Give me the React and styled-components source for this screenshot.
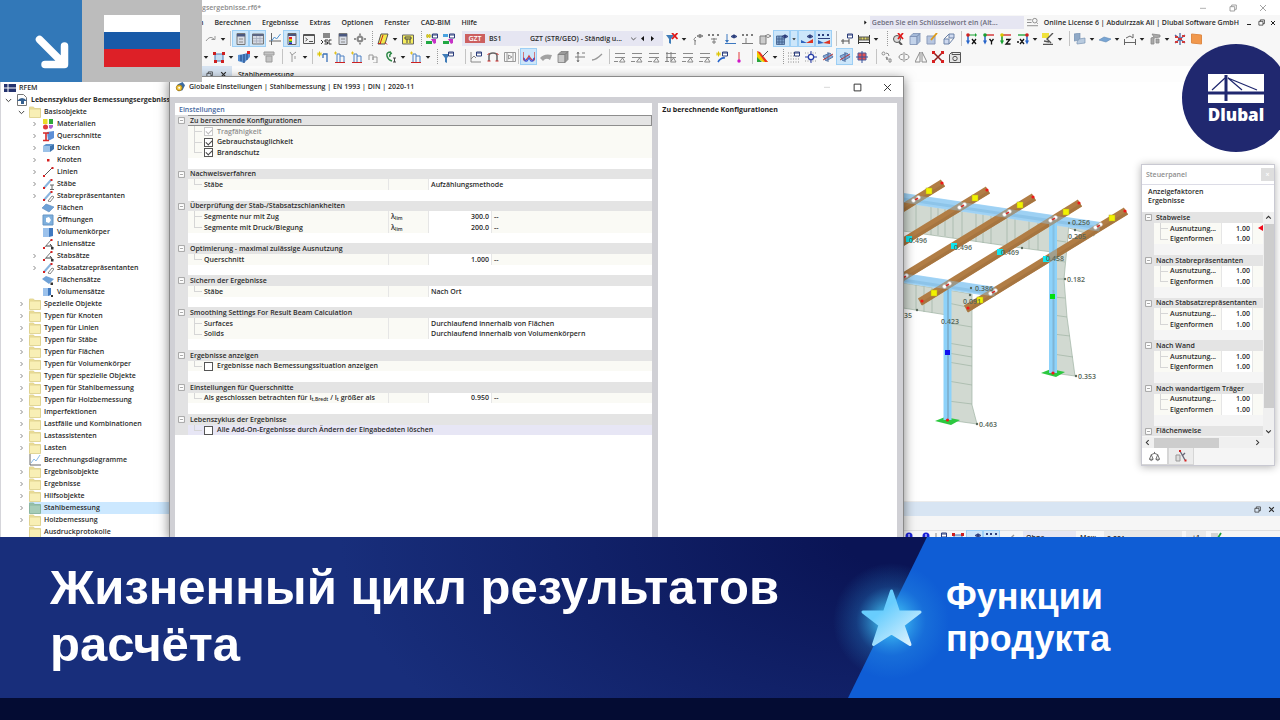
import React from 'react'
import styled, { createGlobalStyle, css } from 'styled-components'

const GlobalStyle = createGlobalStyle`
  * { box-sizing: border-box; }
  body {
    margin: 0;
    background: #040c33;
  }
  button, input, select {
    font: inherit;
    color: inherit;
    margin: 0;
    padding: 0;
    border: 0;
    background: none;
  }
`

const Page = styled.div`
  display: flex;
  flex-direction: column;
  height: 100vh;
  overflow: hidden;
  background: #040c33;
`

const AppWindow = styled.div`
  position: relative;
  flex: 1;
  min-height: 0;
  display: flex;
  flex-direction: column;
  overflow: hidden;
  background: #fff;
  color: #2b2b2b;
  font-family: 'Open Sans', 'Noto Sans', sans-serif;
  font-size: 7px;
  font-weight: 600;
  line-height: 10px;
`

/* ---------- title, menu, toolbars ---------- */

const TitleBar = styled.header`
  flex: none;
  display: flex;
  align-items: center;
  height: 15px;
  padding: 0 12px 0 202px;
  color: #8c8c8c;
`

const WindowButtons = styled.div`
  display: flex;
  gap: ${p => p.gap || 20}px;
  margin-left: ${p => (p.$inline ? 0 : 'auto')};
  color: ${p => p.color || '#8c8c8c'};

  button {
    display: flex;
    align-items: center;
    justify-content: center;
    width: 10px;
    height: 10px;
  }
`

const MenuBar = styled.nav`
  flex: none;
  display: flex;
  align-items: center;
  height: 15px;
  padding: 0 2px 0 199px;
  background: #f7f7f7;

  a {
    margin-right: 11px;
    color: inherit;
    text-decoration: none;
    white-space: nowrap;
  }
`

const Search = styled.div`
  display: flex;
  align-items: center;
  margin-left: auto;
  margin-right: 3px;

  input {
    width: 154px;
    height: 13px;
    margin-left: 1px;
    padding: 0 2px;
    background: #e6e6f2;
  }
  input::placeholder {
    color: #6c6c7c;
    opacity: 1;
  }
`

const License = styled.span`
  margin: 0 5px 0 6px;
  white-space: nowrap;
`

const Toolbar = styled.div`
  flex: none;
  display: flex;
  align-items: center;
  height: ${p => p.height}px;
  padding-left: 202px;
  background: #f7f7f7;
  overflow: hidden;
`

const Group = styled.div`
  flex: none;
  display: flex;
  align-items: center;
  width: ${p => p.$w}px;
  height: 15px;
  border-left: 1px ${p => (p.$dots ? 'dotted #9a9a9a' : 'solid #c4c4c4')};
  padding-left: ${p => (p.$first ? 0 : 1)}px;
  ${p => p.$first && 'border-left: 0;'}
`

const ToolButton = styled.button`
  display: flex;
  flex: none;
  align-items: center;
  justify-content: center;
  width: ${p => (p.$caret ? 8 : 17)}px;
  height: 17px;

  ${p => p.$active && css`
    background: #cce6fa;
    border: 1px solid #9dcff5;
  `}
`

const CaseBar = styled.div`
  flex: none;
  display: flex;
  align-items: center;
  width: 201px;
  height: 15px;
  background: #e6e6f2;

  label {
    display: flex;
    align-items: center;
    width: 65px;
    padding-left: 3px;
  }
  select {
    appearance: none;
    width: 103px;
    padding-left: 3px;
  }
  button {
    width: 10px;
    height: 10px;
  }
`

const Badge = styled.span`
  width: 20px;
  margin-right: 4px;
  background: #cc5f5f;
  color: #fff;
  line-height: 9px;
  text-align: center;
`

const Body = styled.div`
  flex: 1;
  min-height: 0;
  display: flex;
`

/* ---------- navigator ---------- */

const Sidebar = styled.aside`
  flex: none;
  width: 232px;
  border-left: 1px solid #d5d5da;
  overflow: hidden;
`

const PanelTitle = styled.div`
  display: flex;
  align-items: center;
  justify-content: flex-end;
  gap: 7px;
  height: 16px;
  padding-right: 5px;
  background: #d8e5f3;
`

const Tree = styled.ul`
  margin: 0;
  padding: 0;
  list-style: none;
`

const TreeRow = styled.li`
  display: flex;
  align-items: center;
  height: 12px;
  padding-left: ${p => p.$depth * 13 + 3}px;
  white-space: nowrap;
  font-weight: ${p => (p.$bold ? 700 : 600)};

  > svg:first-child {
    flex: none;
    width: 9px;
    margin-right: 3px;
  }
`

const TreeLabel = styled.span`
  display: flex;
  flex: 1;
  align-items: center;
  gap: 3px;
  height: 12px;
  background: ${p => (p.$selected ? '#cce8ff' : 'transparent')};
`

const Main = styled.main`
  flex: 1;
  min-width: 0;
  display: flex;
  flex-direction: column;
`

const TabTitle = styled.div`
  flex: none;
  height: 16px;
  padding: 4px 6px 0;
  background: #fdfdfd;
`

const Canvas = styled.div`
  flex: 1;
  min-height: 0;
  display: flex;
  justify-content: flex-end;
  overflow: hidden;
`

const Dock = styled.section`
  flex: none;
  height: 36px;
  overflow: hidden;
  background: #f6f6f6;
  border-top: 1px solid #ececec;
`

const DockTitle = styled(PanelTitle)`
  height: 14px;
  margin-bottom: 14px;
`

const DockTools = styled.div`
  display: flex;
  align-items: center;
  justify-content: flex-end;
  height: 15px;
  border-top: 1px solid #e0e0e0;
  padding-right: 58px;

  select, input {
    height: 15px;
    padding: 0 3px;
    background: #e8e8e8;
  }
  select {
    appearance: none;
    width: 53px;
    background: #e6e6f2;
    margin-left: 4px;
  }
  label {
    display: flex;
    align-items: center;
    justify-content: space-between;
    width: 102px;
    margin: 0 4px;
  }
  input { width: 78px; }
`

const StepButton = styled.button`
  width: 20px;
  height: 15px;
  margin-right: 4px;
  background: #e8e8e8;
`

/* ---------- dialog ---------- */

const Dialog = styled.section`
  position: absolute;
  top: 76px;
  bottom: 0;
  left: 169px;
  right: 376px;
  display: flex;
  flex-direction: column;
  border: 1px solid #8a8a8a;
  border-width: 1px 1px 0 1px;
  background: #d0d0d5;
  box-shadow: 0 3px 11px rgba(0, 0, 0, 0.5);
`

const DialogTitle = styled.header`
  flex: none;
  display: flex;
  align-items: center;
  gap: 4px;
  height: 20px;
  padding: 0 11px 0 5px;
  background: #fff;

  h2 {
    margin: 0;
    font-size: inherit;
    font-weight: inherit;
  }
  button:first-child { color: #c4c4c4; }
`

const DialogBody = styled.div`
  flex: 1;
  min-height: 0;
  display: flex;
  gap: 6px;
  padding: 6px 6px 0 5px;
`

const Pane = styled.div`
  flex: ${p => p.$grow} 1 0;
  min-width: 0;
  background: #fff;
  overflow: hidden;
`

const PaneTitle = styled.h3`
  margin: 0;
  padding: 0 4px;
  height: 12px;
  font-size: 7px;
  line-height: 13px;
  font-weight: ${p => (p.$dark ? 700 : 600)};
  color: ${p => (p.$dark ? '#1c1c1c' : '#48689f')};
`

/* property grid: three rows share 32px */
const Grid = styled.table`
  width: 100%;
  table-layout: fixed;
  border-collapse: separate;
  border-spacing: 0;

  tr { height: 11px; }
  tr:nth-child(3n) { height: 10px; }
  td, th {
    padding: 0;
    line-height: 10px;
    text-align: left;
    font-weight: 600;
    white-space: nowrap;
    overflow: hidden;
  }
`

const Gutter = styled.td`
  background: #e2e2e3;

  > div {
    display: flex;
    align-items: center;
    justify-content: center;
    height: 10px;
  }
`

const Head = styled.th`
  background: #e4e4e4;

  && { padding-left: 2px; }
  ${p => p.$focus && css`
    box-shadow: inset 0 1px #8d8d8d, inset -1px 0 #8d8d8d, inset 0 -1px #8d8d8d;
  `}
`

const Cell = styled.td`
  background: ${p => (p.$hot ? '#e7e6f5' : p.$value ? '#fff' : '#fafaf5')};
  border-left: ${p => (p.$line ? '1px solid #e6e6e6' : '0')};

  && {
    text-align: ${p => (p.$right ? 'right' : 'left')};
    padding: 0 2px;
  }
  sub {
    font-size: 5px;
    line-height: 1px;
    vertical-align: -1px;
  }
`

const ItemLabel = styled.label`
  display: flex;
  align-items: center;
  height: 10px;
  color: ${p => (p.$off ? '#8f8f8f' : 'inherit')};

  > svg { flex: none; margin-right: 2px; }
`

const Check = styled.input`
  appearance: none;
  flex: none;
  width: 9px;
  height: 9px;
  margin-right: 4px;
  border: 1px solid #555;
  background: #fff;

  &:disabled { border-color: #c9c9c9; }
  &:checked::after {
    content: '';
    display: block;
    width: 5px;
    height: 3px;
    margin: 1px;
    border: solid #444;
    border-width: 0 0 1px 1px;
    transform: rotate(-45deg);
  }
  &:checked:disabled::after { border-color: #bbb; }
`

/* ---------- control panel ---------- */

const ControlPanel = styled.section`
  position: absolute;
  top: 164px;
  right: 5px;
  width: 134px;
  border: 1px solid #c9c9d2;
  background: #f5f5f5;
  box-shadow: 0 1px 8px rgba(0, 0, 0, 0.3);
`

const ControlTitle = styled.header`
  display: flex;
  align-items: center;
  justify-content: space-between;
  height: 20px;
  padding-left: 4px;
  background: #fff;
  border-bottom: 1px solid #dcdce6;
  color: #8e8e8e;

  button {
    width: 13px;
    height: 13px;
    background: #dedede;
    color: #fff;
    line-height: 10px;
  }
`

const ControlHeading = styled.p`
  margin: 0;
  padding: 2px 6px 6px;
  height: 27px;
  background: #fff;
  line-height: 9px;
`

const ScrollArea = styled.div`
  display: flex;
  height: 225px;
  overflow: hidden;

  > div:first-child { flex: 1; min-width: 0; }
`

const VBar = styled.div`
  flex: none;
  display: flex;
  flex-direction: column;
  align-items: center;
  justify-content: space-between;
  width: 11px;
  padding: 2px 0;
  background: #f0f0f0;

  span {
    flex: 1;
    width: 10px;
    margin: 3px 0 20px;
    background: #cdcdcd;
  }
`

const HBar = styled.div`
  display: flex;
  align-items: center;
  height: 11px;
  padding-left: 2px;
  background: #f0f0f0;

  span {
    width: 65px;
    height: 10px;
    margin: 0 35px 0 3px;
    background: #cdcdcd;
  }
`

const Tabs = styled.div`
  display: flex;
  height: 17px;

  button {
    display: flex;
    align-items: center;
    justify-content: center;
    width: 26px;
    border: 1px solid #d6d6d6;
    border-top: 0;
    background: #ececec;
  }
  button:first-child { background: #fff; border-left: 0; }
`

/* ---------- corner badges and banner ---------- */

const Corner = styled.div`
  position: absolute;
  top: 0;
  left: 0;
  display: flex;
  height: 82px;
`

const ArrowBox = styled.div`
  width: 82px;
  background: #3278b8;
`

const FlagBox = styled.div`
  width: 120px;
  padding: 15px 22px;
  background: #bcbcbc;
`

const Flag = styled.div`
  height: 52px;
  background: linear-gradient(#fff 33%, #185aa8 33% 66%, #dd2027 66%);
`

const Logo = styled.div`
  position: absolute;
  top: 44px;
  right: -10px;
  display: flex;
  flex-direction: column;
  align-items: center;
  width: 108px;
  height: 108px;
  padding-top: 30px;
  border-radius: 50%;
  background: #20286f;
  color: #fff;
  font-size: 17px;
  font-weight: 800;
  line-height: 24px;
`

const Banner = styled.section`
  flex: none;
  display: flex;
  height: 161px;
  margin-bottom: 22px;
  background: radial-gradient(ellipse 560px 300px at 900px 0, #0a1455 10%, #182e7b 100%);
  color: #fff;
  font-family: 'Liberation Sans', Arial, sans-serif;
  font-weight: 700;

  h1 {
    flex: 1;
    align-self: center;
    margin: 0;
    padding: 0 0 4px 50px;
    font-size: 49px;
    line-height: 57px;
  }
`

const Category = styled.div`
  position: relative;
  flex: none;
  display: flex;
  align-items: center;
  width: 33.75%;

  span {
    position: relative;
    width: 200px;
    margin-left: 98px;
    font-size: 36px;
    line-height: 42px;
  }
`

const Slant = styled.div`
  position: absolute;
  inset: 0;
  background: #0f5dd5;
  clip-path: polygon(79px 0, 100% 0, 100% 100%, 0 100%);
`

const Star = styled.svg`
  position: absolute;
  top: 0;
  left: -37px;
`

/* ---------- glyphs, all on a 12x12 field ---------- */

const G = '#7c7c7c'
const N = '#2c3f7c'
const eye = (
  <g fill="none" stroke={N}>
    <path d="M6 3.5q3-3 6 0q-3 3-6 0" fill="#dfe6f5" />
    <circle cx="9" cy="3.3" r="1.2" fill={N} />
  </g>
)
const win = <path d="M6.500 1h5v4h-5zM6.500 2h5" fill="#fff" stroke={N} />
const supports = c => (
  <g fill="none" stroke={c}>
    <path d="M1 2.500h10M1 6.500h10" />
    <path d="M5.500 11l3-4l2.500 4zM0 10.500h4" />
  </g>
)

const glyphs = {
  redo: <path d="M1 8q4-6 8-2M10 3v3.500h-3.500" fill="none" stroke="#999" />,
  caret: <path d="M2.500 4.500h7l-3.500 4z" fill="#222" />,
  panel: <g><path d="M2 .5h8v11h-8z" fill="#d9dde5" stroke="#777" /><path d="M2 1h8v2.500h-8z" fill="#4a5880" /><path d="M4 6h4M4 9h4" stroke="#888" /></g>,
  table: <g><path d="M.5 1h11v10H.5z" fill="#d5d9e2" stroke="#777" /><path d="M.5 1h11v2H.5z" fill="#5c6684" /><path d="M1 5.500h10M1 8h10M4.500 3v8M8 3v8" stroke="#a3aabb" strokeWidth=".7" /></g>,
  graph: <g fill="none"><path d="M2.500 0v12M0 8h12" stroke="#666" /><path d="M2.500 8l3-4l2 2l4-5" stroke="#4a8fd0" /></g>,
  legend: <g><path d="M2 .5h8v11h-8z" fill="#eef" stroke="#666" /><path d="M2 1h8v2h-8z" fill="#4a5880" /><path d="M3 4h3v2H3z" fill="#d22" /><path d="M3 6h3v2H3z" fill="#e4c000" /><path d="M3 8h3v1.500H3z" fill="#2a2" /><path d="M3 9.500h3V11H3z" fill="#22c" /></g>,
  terminal: <g fill="none" stroke="#555"><path d="M.5 1.500h11v9H.5z" fill="#f1f1f1" /><path d="M.5 2.500h11M2.500 5l2 1.500l-2 1.500M6 8.500h4" /></g>,
  script: <g><path d="M3 0h7v5H3z" fill="#888" /><path d="M1 7l2 2l-2 2M8 7H5v2h2.500v2H4.500M11.500 7H9v4h2.500" fill="none" stroke="#333" /></g>,
  globe: <g><circle cx="6" cy="6" r="3.500" fill="#888" /><circle cx="6" cy="6" r="1.300" fill="#fff" /><path d="M0 6h2M10 6h2M6 .5v2M6 10v1.500" stroke="#333" /></g>,
  section: <g><path d="M4 1h7L8 11H1z" fill="#f3e84a" stroke="#555" /><path d="M3 11L6 2M1 10.500h3M8 9.500l2 2" stroke="#c22" /></g>,
  note: <g><path d="M.5 2h11v9H.5z" fill="#f6ee5e" stroke="#666" /><path d="M3 4h6v2H3zM5 6v4M8 6v4" fill="none" stroke="#444" /></g>,
  newcase: <g><path d="M0 8h6v3H0z" fill="#21a843" /><path d="M0 1.500h6v3H0z" fill="#b9c9b0" /><path d="M1 1l3 4M4 1L1 5M0 3h5" stroke="#dcc400" />{win}<path d="M5 6h5v4l-2 1z" fill="#c632c6" /></g>,
  copycase: <g><path d="M0 8h6v3H0z" fill="#21a843" /><path d="M0 1h5v3H0z" fill="#4aa3df" />{win}<path d="M5 6h5v4l-2 1z" fill="#c632c6" /></g>,
  left: <path d="M8 2.500v7l-4-3.500z" fill="#111" />,
  right: <path d="M4 2.500v7l4-3.500z" fill="#111" />,
  filterx: <g><path d="M0 2h8l-3 4v5l-2-1V6z" fill="#3f7cb8" /><path d="M6 0l5.500 6M11.500 0L6 6" stroke="#e01818" strokeWidth="1.800" /></g>,
  filter: <g><path d="M0 3h8l-3 4v5l-2-1V7z" fill="#3f7cb8" />{win}</g>,
  eyegray: <g fill="none" stroke={G}><path d="M6 3q3-3 6 0q-3 3-6 0M5 4q-4 3 0 4M4 7v5" /><circle cx="9" cy="3" r="1" fill={G} /></g>,
  forces: <g fill="none" stroke={G}><path d="M0 1l2 2M2 1L0 3M4 1l2 2M6 1L4 3M9 1l2 2M11 1L9 3M3 6h6M6 5v6M4 9h4" /></g>,
  eyeload: <g>{eye}<path d="M2 1v8M0 10.500h11" fill="none" stroke="#3c78c0" /><path d="M0 7l2 3l2-3z" fill="#3c78c0" /></g>,
  values: <g fill="none" stroke={G}><path d="M0 1l2 2M2 1L0 3M4 1l2 2M6 1L4 3M9 1l2 2M11 1L9 3M4 5v5M0 10.500h11" /></g>,
  eyebox: <g stroke={G} fill="#ccc"><path d="M1 3h6v8H1z" /><path d="M6 3q3-3 6 0q-3 3-6 0" fill="#fff" /></g>,
  eyegrid: <g><path d="M.5 3h8v8.500h-8zM3 3v8.500M6 3v8.500M.5 6h8M.5 9h8" fill="#7fa2cc" stroke="#3d5b88" strokeWidth=".8" />{eye}</g>,
  eyebeam: <g>{eye}<path d="M0 10V7l6 3z" fill="#2d63bd" /><path d="M12 6v4H5z" fill="#d32" /></g>,
  eyevals: <g><path d="M0 1l2 2M2 1L0 3M4 1l2 2M6 1L4 3M9 1l2 2M11 1L9 3M0 5.500h12" stroke={N} /><path d="M0 11V7l6 3z" fill="#2d63bd" /><path d="M12 7v4l-7-1z" fill="#d32" /></g>,
  wincfg: <g>{win}<path d="M0 8h8M2 6v5M8 6v5" stroke="#555" /></g>,
  dims: <g><path d="M.5 2v9M11.500 2v9M0 9.500h12" stroke="#333" /><path d="M1 4h10v3H1z" fill="#e6dc5e" stroke="#555" /><path d="M3 4v3M6 4v3M9 4v3" stroke="#555" /></g>,
  findx: <g><circle cx="5" cy="6" r="3.500" fill="#ddd" stroke="#555" /><path d="M7 9l3 3" stroke="#555" strokeWidth="2" /><path d="M6 0l5 6M11 0L6 6" stroke="#e01818" strokeWidth="1.700" /></g>,
  cube: <g stroke="#7b8fb2" strokeWidth=".8" fill="#c3d3ea"><path d="M1 3.500h7v8H1z" /><path d="M1 3.500l3-3h7l-3 3zM8 3.500l3-3v8l-3 3z" fill="#a4b9d8" /></g>,
  cubegray: <g stroke="#7d7d7d" strokeWidth=".8" fill="#c9c9c9"><path d="M1 3.500h7v8H1z" /><path d="M1 3.500l3-3h7l-3 3zM8 3.500l3-3v8l-3 3z" fill="#999" /></g>,
  cubeedit: <g><path d="M1 3h8v8H1z" fill="#b7c6e0" stroke="#8b9bba" /><path d="M11 0L5 7" stroke="#dd9a18" strokeWidth="1.800" /></g>,
  cubes: <g fill="#cfdaf0" stroke="#6d83a8"><path d="M6 1h5v4H6z" /><path d="M1 6h5v5H1zM1 6l5-5M6 11l5-6" /></g>,
  axX: <g><path d="M2 1v8" stroke="#2764c9" strokeWidth="1.500" /><path d="M0 7.500h4l-2 4z" fill="#2764c9" /><path d="M3 2h8M9.500 .5v3" stroke="#18a031" /><circle cx="2" cy="2" r="1.800" fill="#d02020" /><path d="M6 6l4 5M10 6l-4 5" stroke="#111" strokeWidth="1.300" /></g>,
  axY: <g><path d="M2 1v8" stroke="#2764c9" strokeWidth="1.500" /><path d="M0 7.500h4l-2 4z" fill="#2764c9" /><path d="M3 2h8" stroke="#d02020" strokeWidth="1.300" /><circle cx="2" cy="2" r="1.800" fill="#18a031" /><path d="M6.500 6l2 2.500l2-2.500M8.500 8.500v3" fill="none" stroke="#111" strokeWidth="1.300" /></g>,
  axZ: <g><path d="M2 1v8" stroke="#16981f" strokeWidth="1.500" /><path d="M0 7.500h4l-2 4z" fill="#18a031" /><path d="M3 2h8" stroke="#d02020" strokeWidth="1.300" /><circle cx="2" cy="2" r="1.800" fill="#d9c400" /><path d="M6 6.500h4l-4 4.500h4.500" fill="none" stroke="#111" strokeWidth="1.300" /></g>,
  axN: <g><path d="M10 1v8" stroke="#2764c9" strokeWidth="1.500" /><path d="M8 7.500h4l-2 4z" fill="#2764c9" /><path d="M1 2h8" stroke="#18a031" strokeWidth="1.300" /><circle cx="10" cy="2" r="1.800" fill="#d02020" /><path d="M3 6l4 5M7 6l-4 5M0 9h2" stroke="#111" strokeWidth="1.300" /></g>,
  scope: <g><path d="M0 0h7v5H0z" fill="#f0e23c" /><path d="M11 0L5 6l4 4M1 11.500h10M2 8l5 1" fill="none" stroke="#555" strokeWidth="1.400" /></g>,
  solids: <g><path d="M0 1l6-1v7l-6 1z" fill="#90a9c7" stroke="#7a93b3" strokeWidth=".7" /><path d="M5 6l6-1v5l-8 1V9z" fill="#b9cbdf" stroke="#7a93b3" strokeWidth=".7" /></g>,
  surface: <path d="M0 7l5-3l7 2l-5 3z" fill="#78a5d4" stroke="#5f88b3" strokeWidth=".6" />,
  measure: <g fill="none" stroke="#666"><path d="M0 9.500h12M.5 6v6M11.500 6v6M2 5l4-2l3 2M9 1v4" /></g>,
  press: <g fill="#aaa" stroke="#888" strokeWidth=".8"><path d="M3 1l8 1v2l-6 1v6H2V5l3-1z" /><path d="M7 6h3v4H7z" /></g>,
  burst: <g><path d="M1 2l10 8M11 2L1 10M6 0v12" stroke="#4a68a4" strokeWidth="1.300" /><path d="M1 3h3v2H1zM8 2h3v2H8zM4 5h4v2H4zM1 8h3v2H1zM8 8h3v2H8z" fill="#cf3b3b" /></g>,
  slab: <path d="M.5 1l10 1v9l-10-1z" fill="#f1984c" stroke="#e08a45" />,
  frame: <g><path d="M2 3h8v7H2z" fill="#c6def2" stroke="#4878b5" /><path d="M0 1h3v3H0zM9 1h3v3H9zM1 9h3v3H1zM8 9h3v3H8z" fill="#ce1f1f" /></g>,
  plates: <g><path d="M0 4l6-1l6-2v5l-6 6l-6-2z" fill="#5a92d4" /><path d="M3 4v6M6 3v9M9 3v6" stroke="#1e437c" /><path d="M9 0h3v3H9z" fill="#d22" /></g>,
  block: <g fill="#c4c4c4" stroke="#9c9c9c"><path d="M1 1h10v3H1z" /><path d="M3 5h6v6H3z" /></g>,
  hingegray: <g fill="none" stroke="#9a9a9a"><path d="M3 1l2 3l4-3M5 4v7M8 5v3" /></g>,
  newload: <g><path d="M0 3h5M2.500 .5v5M1 1.500l3 3M4 1.500l-3 3" stroke="#dcc400" /><path d="M6 3h4v8M6 3v4" fill="none" stroke="#3c72b8" strokeWidth="1.300" /></g>,
  load: <g fill="none" stroke="#4a7fc2"><path d="M3 11V3h3v8M6 5h4v6" /><path d="M0 2h3M1.500 .5v3" stroke="#e0c020" /><path d="M1 11.500h10" stroke="#c22" /></g>,
  loadgray: <g fill="none" stroke="#999"><path d="M1 9V4h4v5M5 9V6h4v6H5" /></g>,
  coil: <g fill="none" stroke="#2f8a48" strokeWidth="1.500"><path d="M6 1q-5 0-4 4t5 5M7 2q-3 1-2 4" /><path d="M8 7h3M9.500 7v4M8 11h3" stroke="#444" strokeWidth="1" /></g>,
  diagram: <g>{win}<path d="M1 1v10h10M1 8l3-3l2 2" fill="none" stroke="#888" /></g>,
  arch: <g><path d="M2 10V5q0-3 4-3t4 3v5" fill="none" stroke="#666" strokeWidth="1.500" /><path d="M.5 10h3M8.500 10h3M.5 4l2-2M11.500 4l-2-2" stroke="#c22" /></g>,
  film: <g fill="none" stroke="#999"><path d="M.5 1.500h11v9H.5zM3 1.500v9M9 1.500v9M4.500 4l3.500 2l-3.500 2z" /></g>,
  wave: <g fill="none" strokeWidth="1.300"><path d="M0 1v5q1 5 3 3t3-4q1 2 3 4t3-3V1" stroke="#d23a3a" /><path d="M1 7q1 4 3 3l2-3l2 3q2 1 3-3" stroke="#3a5ae0" /></g>,
  shell: <path d="M0 7q4-5 12-3l-2 5q-4-3-7 1z" fill="#a2a2a2" />,
  arrows: <g fill="none" stroke={G}><path d="M4 1v10M1 6h10M3 3l1-2l1 2M8 2h3M3 9l1 2l1-2" /></g>,
  line: <path d="M1 9q4 0 10-6" fill="none" stroke="#999" strokeWidth="1.300" />,
  sup: supports('#8a8a8a'),
  supall: <g>{supports('#8a8a8a')}<path d="M2 1v10M6 1v9" stroke={G} /></g>,
  newwin: <g>{win}<path d="M0 3h5M2.500 .5v5M1 1.500l3 3M4 1.500l-3 3" stroke="#dcc400" /><path d="M2 11q3-5 7-4" fill="none" stroke="#2764c9" strokeWidth="1.600" /></g>,
  pin: <g><path d="M6 1v8" stroke="#e23a3a" /><circle cx="6" cy="10" r="1.700" fill="#cf16c8" /></g>,
  rainbow: <g><path d="M0 0l11 11H6L0 7z" fill="#f0d000" /><path d="M0 0l3 1l8 10H8z" fill="#e32" /><path d="M0 6l5 5H0z" fill="#2aa63a" /><path d="M5 6l6-6" stroke="#555" /></g>,
  dotgrid: <g><path d="M0 2h12M0 5h12M0 8h12M0 11h12" stroke="#888" strokeDasharray="1 1.500" />{win}</g>,
  snap: <g><path d="M0 2h12M0 10h12" stroke="#999" strokeDasharray="1 1.500" /><circle cx="6" cy="6" r="2.700" fill="#fff" stroke="#2a3fa8" strokeWidth="1.300" /><path d="M6 0v3M6 9v3M0 6h3M9 6h3" stroke="#2a3fa8" /></g>,
  cross: <g><path d="M1 5l7-3l3 4l-7 4z" fill="#86a9d6" stroke="#5a7aac" /><path d="M1 9l10-6" stroke="#c23a3a" /><path d="M6 1v10" stroke="#4a6a9c" /></g>,
  crossred: <g><path d="M2 2h8v7H2z" fill="#e25151" stroke="#4a5a9c" /><path d="M0 6h12M6 0v12" stroke="#34509c" /></g>,
  node: <g fill="none" stroke="#8c8c8c"><circle cx="2.500" cy="2.500" r="1.500" /><path d="M5 2q3 0 3 3" /><path d="M5 6l2 1l-1 2zM8 8h2v3H8z" /></g>,
  orbit: <g fill="none" stroke="#8c8c8c"><ellipse cx="6" cy="6" rx="5" ry="3" /><path d="M6 0v12" stroke="#f7f7f7" strokeWidth="2" /><path d="M6 1v10" /></g>,
  mirror: <path d="M5 1v10H0zM7 1v10h5z" fill="none" stroke="#8c8c8c" />,
  redx: <g><path d="M1 1l10 10M11 1L1 11" stroke="#8c2020" strokeWidth="1.500" /><path d="M0 0h3v3H0zM9 0h3v3H9zM0 9h3v3H0zM9 9h3v3H9z" fill="#d81f1f" /></g>,
  camera: <g fill="#e6e6e6" stroke="#555"><path d="M.5 3.500l2-2h9v10H.5zM3 1.500v2h8.500" /><circle cx="6" cy="7.500" r="2.200" /></g>,
  info: <g><path d="M0 6h6v5H0z" fill="#c22" /><circle cx="8" cy="4" r="3.500" fill="#1b22d8" /><path d="M8 2v4" stroke="#fff" /></g>,
  done: <g><path d="M1 1h7v7H1z" fill="#d5d5d5" /><path d="M3 6l3 3l5-8" fill="none" stroke="#1fa03a" strokeWidth="1.800" /></g>,
  folder: <g stroke="#dccf8c" strokeWidth=".8"><path d="M.5 1h4l1 1.500h6v8.500H.5z" fill="#f0e29a" /><path d="M.5 3h11v8.500H.5z" fill="#f8efb5" /></g>,
  folderGreen: <g stroke="#86b39a" strokeWidth=".8"><path d="M.5 1h4l1 1.500h6v8.500H.5z" fill="#9cc6b1" /><path d="M.5 3h11v8.500H.5z" fill="#a6ccb8" /></g>,
  model: <g><path d="M1.500 .5h6l3 3v8h-9z" fill="#fff" stroke="#777" /><path d="M1 7q5-6 10 0H8v3H5V7z" fill="#35608f" /></g>,
  material: <g><path d="M1 1h4.500v5H1z" fill="#e9dc26" /><path d="M7 1h4v5H7z" fill="#2fa83a" /><circle cx="3.500" cy="9" r="2.500" fill="#e03a3a" /><path d="M7 7h4v2l-2 2l-2-1z" fill="#b05fd0" /></g>,
  profile: <g><path d="M5 2l7-1v7l-6 3z" fill="#5d8fd6" /><path d="M1 3h6M4 3v7M1 10.500h6" stroke="#d62a2a" strokeWidth="1.600" /></g>,
  thick: <g><path d="M1 4h7v6H1z" fill="#9cc2e8" /><path d="M1 4l3-2h8L8 4z" fill="#5e94cd" /><path d="M8 4l4-2v5l-4 3z" fill="#3c73af" /></g>,
  dot: <path d="M5 5h2.500v2.500H5z" fill="#d62020" />,
  ln: <g><path d="M2 10l8-8" stroke="#555" /><path d="M1 9h2v2H1zM9.500 1h2v2h-2z" fill="#d62020" /></g>,
  bar: <g><path d="M2 10l7-8" stroke="#8ab4de" strokeWidth="2" /><path d="M1 9h2v2H1zM8.500 1h2v2h-2z" fill="#d62020" /><path d="M8 7h4M10 7v4M8 11.500h4" stroke="#666" /></g>,
  barrep: <g><path d="M2 10l7-8" stroke="#8ab4de" strokeWidth="2" /><path d="M1 9h2v2H1zM8.500 1h2v2h-2z" fill="#d62020" /><path d="M6 11l4-5l2 1l-4 5z" fill="#fff" stroke="#666" strokeWidth=".8" /></g>,
  face: <path d="M0 6l4-4l8 3l-5 5z" fill="#6fa1d6" stroke="#5d8cbe" strokeWidth=".6" />,
  hole: <g><path d="M1 1h10v10H1z" fill="#7eb0de" stroke="#6695c3" /><path d="M4 4l3-1l2 3l-2 3l-3-1z" fill="#fff" /></g>,
  vol: <g><path d="M1 2h6v9H1z" fill="#9cc2ec" /><path d="M7 2h4v8l-4 1z" fill="#4079c0" /></g>,
  set: <g><path d="M2 10l7-8" stroke="#777" /><path d="M1 9h2v2H1zM8.500 1h2v2h-2z" fill="#d62020" /><path d="M4 8h6M8 6l3 4" stroke="#444" /><path d="M9 9h2.500v2.500H9z" fill="#333" /></g>,
  faceset: <g><path d="M0 5l4-3l8 3l-5 5z" fill="#6fa1d6" /><path d="M8.500 8.500H11V11H8.500z" fill="#333" /></g>,
  volset: <g><path d="M1 2h5v8H1z" fill="#9cc2ec" /><path d="M6 2h3v7l-3 1z" fill="#4079c0" /><path d="M9 9h2v2H9z" fill="#333" /></g>,
  chart: <g fill="none"><path d="M1 0v11h11" stroke="#666" /><path d="M2 9l3-4l2 2l4-6" stroke="#8abbe6" /></g>,
  flag: <g><path d="M0 2h12v8H0z" fill="#25336e" /><path d="M0 6h12M4 2v8" stroke="#fff" /></g>,
  gear: <g><path d="M3 3l6-3l3 4l-3 6l-5 1z" fill="#3b6aa0" /><circle cx="5" cy="7" r="3.500" fill="#f0c53d" stroke="#a87c10" /><circle cx="5" cy="7" r="1.200" fill="#fff" /></g>,
  scales: <g fill="none" stroke="#555" strokeWidth=".9"><path d="M6 1v2M2.500 4L6 2.500L9.500 4M2.500 4L.5 9h4zM9.500 4l-2 5h4zM.5 9q2 3 4 0M7.500 9q2 3 4 0" /></g>,
  tabmodel: <g><path d="M1 5h4v6H1z" fill="#ddd" stroke="#999" /><path d="M5 1l5 9M10 3L7 6" stroke="#667" strokeWidth="1.300" /><path d="M4 0h2v2H4zM9.500 9.500h2v2h-2z" fill="#d62020" /></g>,
  expand: <path d="M4.500 3l3 3l-3 3" fill="none" stroke="#777" strokeWidth="1.300" />,
  collapse: <path d="M2 4.500l4 4l4-4" fill="none" stroke="#444" strokeWidth="1.500" />,
  up: <path d="M2 8l4-4l4 4" fill="none" stroke="#333" strokeWidth="1.800" />,
  down: <path d="M2 4l4 4l4-4" fill="none" stroke="#333" strokeWidth="1.800" />,
  prev: <path d="M8 2L4 6l4 4" fill="none" stroke="#333" strokeWidth="1.800" />,
  next: <path d="M4 2l4 4l-4 4" fill="none" stroke="#333" strokeWidth="1.800" />,
  min: <path d="M1.500 6.500h9" stroke="currentColor" />,
  minlow: <path d="M2 9h8" stroke="currentColor" strokeWidth="2" />,
  max: <path d="M1.500 1.500h9v9h-9z" fill="none" stroke="currentColor" strokeWidth="1.200" />,
  restore: <path d="M1.500 4h7v6.500h-7zM4 4V1.500h7V8H8.500" fill="none" stroke="currentColor" strokeWidth="1.200" />,
  close: <path d="M1.500 1.500l9 9M10.500 1.500l-9 9" stroke="currentColor" strokeWidth="1.200" />,
  closebold: <path d="M2 2l8 8M10 2l-8 8" stroke="currentColor" strokeWidth="2" />,
  minus: <g fill="#fff" stroke="#8d8d8d" strokeWidth="1.300"><path d="M1 1h10v10H1zM3.500 6h5" /></g>,
  list: <g fill="none" stroke="#888"><path d="M0 3h5M0 6h5M0 9.500h12" /><circle cx="8.500" cy="4" r="2.500" /><path d="M10.500 6l1.500 1.500" /></g>,
  empty: null,
}

const Icon = ({ name, size = 12 }) => (
  <svg width={size} height={size} viewBox="0 0 12 12" aria-hidden="true">{glyphs[name]}</svg>
)

// a leading "*" marks a pressed button, "v" is a drop-down caret
const row1a = [
  { w: 28, first: true, items: 'redo v' },
  { w: 142, items: '*panel *table graph *legend terminal script panel globe' },
  { w: 49, dots: true, items: 'section v note' },
  { w: 41, dots: true, items: 'newcase copycase' },
]
const row1b = [
  { w: 173, first: true, items: 'filterx v eyegray forces eyeload values eyebox *eyegrid *v *eyebeam *eyevals' },
  { w: 51, items: 'wincfg dims v' },
  { w: 74, dots: true, items: 'findx cube cubeedit cubes' },
  { w: 108, items: 'axX axY axZ axN v scope v' },
  { w: 140, items: 'solids v surface v measure v press v burst slab' },
]
const row2 = [
  { w: 80, first: true, items: 'v frame v plates v block' },
  { w: 30, items: 'hingegray v' },
  { w: 125, items: 'newload load load loadgray coil v load v' },
  { w: 28, dots: true, items: 'filter' },
  { w: 53, items: 'diagram arch film' },
  { w: 91, items: '*wave shell cubegray arrows line' },
  { w: 143, items: 'sup sup sup supall sup sup newwin pin' },
  { w: 31, items: 'rainbow v' },
  { w: 93, dots: true, items: 'dotgrid snap cross *cross crossred' },
  { w: 92, items: 'node orbit mirror redx camera' },
]

const ToolGroups = ({ groups }) => groups.map((g, i) => (
  <Group key={i} $w={g.w} $dots={g.dots} $first={g.first}>
    {g.items.split(' ').map((raw, j) => {
      const active = raw[0] === '*'
      const name = active ? raw.slice(1) : raw
      const caret = name === 'v'
      return (
        <ToolButton key={j} $active={active} $caret={caret} aria-label={caret ? 'more' : name}>
          <Icon name={caret ? 'caret' : name} size={caret ? 8 : 12} />
        </ToolButton>
      )
    })}
  </Group>
))

const tree = [
  [1, 'Basisobjekte', 'folder', 'collapse'],
  [2, 'Materialien', 'material'],
  [2, 'Querschnitte', 'profile'],
  [2, 'Dicken', 'thick'],
  [2, 'Knoten', 'dot'],
  [2, 'Linien', 'ln'],
  [2, 'Stäbe', 'bar'],
  [2, 'Stabrepräsentanten', 'barrep'],
  [2, 'Flächen', 'face', 'empty'],
  [2, 'Öffnungen', 'hole', 'empty'],
  [2, 'Volumenkörper', 'vol', 'empty'],
  [2, 'Liniensätze', 'set', 'empty'],
  [2, 'Stabsätze', 'set'],
  [2, 'Stabsatzrepräsentanten', 'barrep'],
  [2, 'Flächensätze', 'faceset', 'empty'],
  [2, 'Volumensätze', 'volset', 'empty'],
  [1, 'Spezielle Objekte'],
  [1, 'Typen für Knoten'],
  [1, 'Typen für Linien'],
  [1, 'Typen für Stäbe'],
  [1, 'Typen für Flächen'],
  [1, 'Typen für Volumenkörper'],
  [1, 'Typen für spezielle Objekte'],
  [1, 'Typen für Stahlbemessung'],
  [1, 'Typen für Holzbemessung'],
  [1, 'Imperfektionen'],
  [1, 'Lastfälle und Kombinationen'],
  [1, 'Lastassistenten'],
  [1, 'Lasten'],
  [1, 'Berechnungsdiagramme', 'chart', 'empty'],
  [1, 'Ergebnisobjekte'],
  [1, 'Ergebnisse'],
  [1, 'Hilfsobjekte'],
  [1, 'Stahlbemessung', 'folderGreen', 'expand', true],
  [1, 'Holzbemessung'],
  [1, 'Ausdruckprotokolle', 'folder', 'empty'],
]

const lim = <>λ<sub>lim</sub></>

const settings = [
  { title: 'Zu berechnende Konfigurationen', focus: true, rows: [
    { check: true, on: true, off: true, label: 'Tragfähigkeit' },
    { check: true, on: true, label: 'Gebrauchstauglichkeit' },
    { check: true, on: true, label: 'Brandschutz' },
  ] },
  { title: 'Nachweisverfahren', rows: [{ label: 'Stäbe', text: 'Aufzählungsmethode' }] },
  { title: 'Überprüfung der Stab-/Stabsatzschlankheiten', rows: [
    { label: 'Segmente nur mit Zug', sym: lim, num: '300.0' },
    { label: 'Segmente mit Druck/Biegung', sym: lim, num: '200.0' },
  ] },
  { title: 'Optimierung - maximal zulässige Ausnutzung', rows: [{ label: 'Querschnitt', num: '1.000' }] },
  { title: 'Sichern der Ergebnisse', rows: [{ label: 'Stäbe', text: 'Nach Ort' }] },
  { title: 'Smoothing Settings For Result Beam Calculation', rows: [
    { label: 'Surfaces', text: 'Durchlaufend innerhalb von Flächen' },
    { label: 'Solids', text: 'Durchlaufend innerhalb von Volumenkörpern' },
  ] },
  { title: 'Ergebnisse anzeigen', rows: [{ check: true, label: 'Ergebnisse nach Bemessungssituation anzeigen' }] },
  { title: 'Einstellungen für Querschnitte', rows: [
    { label: <span>Als geschlossen betrachten für I<sub>t,Bredt</sub> / I<sub>t</sub> größer als</span>, num: '0.950' },
  ] },
  { title: 'Lebenszyklus der Ergebnisse', rows: [
    { check: true, hot: true, label: 'Alle Add-On-Ergebnisse durch Ändern der Eingabedaten löschen' },
  ] },
]

const factors = [
  'Stabweise', 'Nach Stabrepräsentanten', 'Nach Stabsatzrepräsentanten',
  'Nach Wand', 'Nach wandartigem Träger', 'Flächenweise',
]

const Branch = ({ last }) => (
  <svg width="12" height="11" viewBox="0 0 12 11">
    <path d={`M4.500 0V${last ? 5 : 11}M4 5.500h8`} stroke="#d6d6d6" fill="none" />
  </svg>
)

const Toggle = () => <Gutter><div><Icon name="minus" size={7} /></div></Gutter>

const SettingsGrid = () => (
  <Grid>
    <colgroup>
      <col width="13" /><col width="200" /><col width="40" /><col width="63" /><col />
    </colgroup>
    <tbody>
      {settings.map((s, i) => (
        <React.Fragment key={s.title}>
          <tr><Toggle /><Head colSpan="4" scope="rowgroup" $focus={s.focus}>{s.title}</Head></tr>
          {s.rows.map((r, j) => {
            const name = (
              <ItemLabel as={r.check ? 'label' : 'span'} $off={r.off}>
                <Branch last={j === s.rows.length - 1} />
                {r.check && <Check type="checkbox" defaultChecked={r.on} disabled={r.off} />}
                {r.label}
              </ItemLabel>
            )
            return (
              <tr key={j}>
                <Gutter />
                <Cell colSpan={r.check ? 4 : 1} $hot={r.hot}>{name}</Cell>
                {!r.check && <Cell $line>{r.sym}</Cell>}
                {r.text && <Cell $value $line colSpan="2">{r.text}</Cell>}
                {r.num && <Cell $value $line $right>{r.num}</Cell>}
                {r.num && <Cell $line>--</Cell>}
              </tr>
            )
          })}
          {i < settings.length - 1 && <tr><Gutter /><td colSpan="4" /></tr>}
        </React.Fragment>
      ))}
    </tbody>
  </Grid>
)

const FactorGrid = () => (
  <Grid>
    <colgroup><col width="12" /><col width="67" /><col width="31" /><col /></colgroup>
    <tbody>
      {factors.map((f, i) => (
        <React.Fragment key={f}>
          <tr><Toggle /><Head colSpan="3" scope="rowgroup">{f}</Head></tr>
          {i < factors.length - 1 && ['Ausnutzung...', 'Eigenformen'].map((n, j) => (
            <tr key={n}>
              <Gutter />
              <Cell><ItemLabel as="span"><Branch last={j === 1} />{n}</ItemLabel></Cell>
              <Cell $value $line $right>1.00</Cell>
              <Cell $line>
                {i === 0 && j === 0 && (
                  <svg width="8" height="6" viewBox="0 0 8 6"><path d="M8 0v6L3 3z" fill="#f00b1c" /></svg>
                )}
              </Cell>
            </tr>
          ))}
          {i < factors.length - 1 && <tr><Gutter /><td colSpan="3" /></tr>}
        </React.Fragment>
      ))}
    </tbody>
  </Grid>
)

/* ---------- structure drawing ---------- */

const rafters = [
  [895, 213, 941, 184],
  [895, 247, 986, 191],
  [895, 282, 1032, 198],
  [922, 301, 1078, 204],
  [968, 308, 1124, 212],
]
const yellow = [[929, 191], [975, 198], [1020, 205], [1066, 212], [1112, 218], [934, 293], [980, 300]]
const cyan = [[909, 239], [954, 246], [1000, 252], [1046, 259]]
const joints = [[916, 199], [962, 206], [1007, 213], [1053, 219], [1098, 226], [904, 277], [947, 285], [993, 292]]
const tags = [
  [909, 243, '0.496'], [954, 250, '0.496'], [1001, 255, '0.469'], [1046, 261, '0.458'],
  [1072, 225, '0.256'], [1068, 239, '0.205'], [1067, 282, '0.182'], [1078, 379, '0.353'],
  [975, 291, '0.386'], [963, 304, '0.091'], [941, 324, '0.423'], [979, 427, '0.463'], [904, 318, '35'],
]
const marks = [[1069, 223], [1075, 230], [1022, 248], [1065, 279], [1076, 376], [971, 288], [970, 295], [917, 310], [977, 424]]

const Structure = () => (
  <svg width="377" height="419" viewBox="903 82 377 419">
    <g stroke="#9fb3a3" strokeWidth=".7" fill="#d1d9d1">
      <path d="M903 202L1052 223v29L1022 248L903 231z" />
      <path d="M1053 223L1096 230L1094 236L1069 228z" />
      <path d="M903 283L947 290v25L903 308z" />
      <path d="M1053 223h16l-2 24l-3 32l3 38l8 59l-22-3z" />
      <path d="M948 290l24 4v111l5 19l-29-4z" />
      <path fill="none" d="M916 204v29M931 206v29M938 207v28M945 208v28M953 209v29M962 210v30M976 212v30M983 213v30M991 214v30M1007 216v30M1015 217v30M1029 219v30M1038 220v30M916 285v25M924 286v26M932 288v25M948 303l24 5M948 323l24 4M948 343l24 4M948 353l24 4M948 362l24 4M948 381l24 4M948 401l24 3M1053 240l13 2M1053 260l12 2M1053 279h11M1053 297l12 1M1053 315l14 2M1053 334l17 2M1053 354l20 3" />
    </g>
    <g fill="#2cc83f">
      <path d="M935 421l10-4l15 3l-9 5z" />
      <path d="M1041 373l10-4l14 3l-9 5z" />
    </g>
    <g fill="none">
      <path d="M903 198L1100 227M903 278L995 292" stroke="#a9d8f8" strokeWidth="10" />
      <path d="M903 199L1100 228M903 280L995 294" stroke="#8cc2e6" strokeWidth="3" />
    </g>
    <g fill="none">
      <path d="M947.500 285V420M1053 220V373" stroke="#8dd2fa" strokeWidth="8" />
      <path d="M948 285V420M1053.500 220V373" stroke="#7fb4d4" strokeWidth="2" />
    </g>
    {rafters.map(([a, b, c, d]) => (
      <g key={b}>
        <path d={`M${a - 2} ${b + 1}L${c + 2} ${d - 1}`} stroke="#b17d45" strokeWidth="8" />
        <path d={`M${a - 1} ${b + 3}L${c + 3} ${d + 1}`} stroke="#a67540" strokeWidth="3" />
      </g>
    ))}
    <g fill="none" opacity=".4">
      <path d="M903 198L1100 227M903 278L995 292" stroke="#8fc7ee" strokeWidth="9" />
      <path d="M1053 220V290" stroke="#8dd2fa" strokeWidth="8" />
    </g>
    {yellow.map(([x, y]) => <rect key={x} x={x - 3} y={y - 3} width="6" height="6" fill="#f2f200" stroke="#b5ac20" strokeWidth=".5" />)}
    {cyan.map(([x, y]) => <rect key={x} x={x - 3} y={y - 3} width="6" height="6" fill="#10e6f2" />)}
    {joints.map(([x, y]) => (
      <g key={x}>
        <circle cx={x - 2.5} cy={y + 1.500} r="2" fill="#fff" stroke="#bbb" strokeWidth=".5" />
        <circle cx={x + 2.5} cy={y - 1.500} r="2" fill="#fff" stroke="#bbb" strokeWidth=".5" />
        <path d={`M${x - 1} ${y + 1}l3-2`} stroke="#d22" strokeWidth="1.500" />
      </g>
    ))}
    {rafters.map(([a, b, c, d]) => (
      <g key={d} fill="#f01818">
        <circle cx={c + 1} cy={d - 1} r="1.600" />
        <circle cx={a} cy={b} r="1.600" />
      </g>
    ))}
    <circle cx="947.500" cy="420" r="1.600" fill="#f01818" />
    <circle cx="1053" cy="373" r="1.600" fill="#f01818" />
    <rect x="945" y="350" width="5" height="5" fill="#1010f0" />
    <rect x="1050" y="294" width="5" height="5" fill="#00e010" />
    {marks.map(([x, y]) => <circle key={`${x}-${y}`} cx={x} cy={y} r="1.200" fill="#5a685c" />)}
    <g fill="#56665a" fontSize="7">
      {tags.map(([x, y, t]) => <text key={`${x}-${y}`} x={x} y={y}>{t}</text>)}
    </g>
  </svg>
)

const WinButton = ({ name, size = 9 }) => (
  <button aria-label={name}><Icon name={name} size={size} /></button>
)

const App = () => (
  <>
    <GlobalStyle />
    <Page>
      <AppWindow>
        <TitleBar>
          <span>gsergebnisse.rf6*</span>
          <WindowButtons><WinButton name="min" size={8} /><WinButton name="restore" size={8} /><WinButton name="close" size={8} /></WindowButtons>
        </TitleBar>

        <MenuBar>
          {['n', 'Berechnen', 'Ergebnisse', 'Extras', 'Optionen', 'Fenster', 'CAD-BIM', 'Hilfe'].map(m => (
            <a key={m} href="#menu">{m}</a>
          ))}
          <Search>
            <Icon name="right" size={7} />
            <input aria-label="Suche" placeholder="Geben Sie ein Schlüsselwort ein (Alt..." />
          </Search>
          <Icon name="list" size={11} />
          <License>Online License 6 | Abdulrzzak Ali | Dlubal Software GmbH</License>
          <WindowButtons $inline gap={2} color="#222"><WinButton name="minlow" size={6} /><WinButton name="restore" size={7} /><WinButton name="closebold" size={6} /></WindowButtons>
        </MenuBar>

        <Toolbar height={17}>
          <ToolGroups groups={row1a} />
          <CaseBar>
            <label><Badge>GZT</Badge>BS1</label>
            <select aria-label="Bemessungssituation"><option>GZT (STR/GEO) - Ständig u...</option></select>
            <Icon name="collapse" size={7} />
            <button aria-label="zurück"><Icon name="left" size={9} /></button>
            <button aria-label="vor"><Icon name="right" size={9} /></button>
          </CaseBar>
          <ToolGroups groups={row1b} />
        </Toolbar>
        <Toolbar height={19}>
          <ToolGroups groups={row2} />
        </Toolbar>

        <Body>
          <Sidebar>
            <PanelTitle><Icon name="restore" size={7} /><Icon name="closebold" size={7} /></PanelTitle>
            <Tree>
              <TreeRow $depth={0}>
                <TreeLabel><Icon name="flag" />RFEM</TreeLabel>
              </TreeRow>
              <TreeRow $depth={0} $bold>
                <Icon name="collapse" size={8} />
                <TreeLabel><Icon name="model" />Lebenszyklus der Bemessungsergebnisse</TreeLabel>
              </TreeRow>
              {tree.map(([depth, label, icon = 'folder', arrow = 'expand', selected]) => (
                <TreeRow key={label} $depth={depth}>
                  <Icon name={arrow} size={8} />
                  <TreeLabel $selected={selected}><Icon name={icon} />{label}</TreeLabel>
                </TreeRow>
              ))}
            </Tree>
          </Sidebar>
          <Main>
            <TabTitle>Stahlbemessung</TabTitle>
            <Canvas><Structure /></Canvas>
            <Dock>
              <DockTitle><Icon name="restore" size={7} /><Icon name="closebold" size={7} /></DockTitle>
              <DockTools>
                <ToolGroups groups={[{ w: 121, first: true, items: 'info info diagram frame *eyebeam *eyevals line' }]} />
                <select aria-label="Anzeige"><option>Ohne</option></select>
                <label>Max: <input defaultValue="0.001" /></label>
                <StepButton>±1</StepButton>
                <Icon name="done" />
              </DockTools>
            </Dock>
          </Main>
        </Body>

        <Dialog>
          <DialogTitle>
            <Icon name="gear" size={10} />
            <h2>Globale Einstellungen | Stahlbemessung | EN 1993 | DIN | 2020-11</h2>
            <WindowButtons color="#222"><WinButton name="min" size={8} /><WinButton name="max" size={9} /><WinButton name="close" size={9} /></WindowButtons>
          </DialogTitle>
          <DialogBody>
            <Pane $grow={2}>
              <PaneTitle>Einstellungen</PaneTitle>
              <SettingsGrid />
            </Pane>
            <Pane $grow={1}>
              <PaneTitle $dark>Zu berechnende Konfigurationen</PaneTitle>
            </Pane>
          </DialogBody>
        </Dialog>

        <ControlPanel>
          <ControlTitle>Steuerpanel<button aria-label="schließen">×</button></ControlTitle>
          <ControlHeading>Anzeigefaktoren<br />Ergebnisse</ControlHeading>
          <ScrollArea>
            <div><FactorGrid /></div>
            <VBar><Icon name="up" size={7} /><span /><Icon name="down" size={7} /></VBar>
          </ScrollArea>
          <HBar><Icon name="prev" size={7} /><span /><Icon name="next" size={7} /></HBar>
          <Tabs>
            <button aria-label="Faktoren"><Icon name="scales" size={11} /></button>
            <button aria-label="Modell"><Icon name="tabmodel" size={12} /></button>
          </Tabs>
        </ControlPanel>

        <Corner>
          <ArrowBox>
            <svg width="82" height="82" viewBox="0 0 82 82">
              <path d="M39.500 39.500L62 62M45 64.500h19.500V46" fill="none" stroke="#fff" strokeWidth="7.500" strokeLinecap="round" strokeLinejoin="round" />
            </svg>
          </ArrowBox>
          <FlagBox><Flag /></FlagBox>
        </Corner>

        <Logo>
          <svg width="56" height="29" viewBox="0 0 56 29">
            <path d="M0 0h56v29H0z" fill="#fff" />
            <path d="M0 19h56M18 1v26" stroke="#20286f" strokeWidth="3" />
            <path d="M17 4L4 16M20 4l29 12M20 4l14 12" stroke="#20286f" strokeWidth="1.200" />
          </svg>
          Dlubal
        </Logo>
      </AppWindow>

      <Banner>
        <h1>Жизненный цикл результатов расчёта</h1>
        <Category>
          <Slant />
          <Star width="161" height="161" viewBox="0 0 161 161">
            <defs>
              <radialGradient id="glow">
                <stop offset=".25" stopColor="#3fc0f5" stopOpacity=".75" />
                <stop offset=".6" stopColor="#2f9fe6" stopOpacity=".25" />
                <stop offset="1" stopColor="#2f9fe6" stopOpacity="0" />
              </radialGradient>
              <linearGradient id="star" x1=".2" y1=".2" x2=".9" y2="1">
                <stop offset=".2" stopColor="#68cdfd" />
                <stop offset="1" stopColor="#e2f4fe" />
              </linearGradient>
            </defs>
            <circle cx="80" cy="84" r="58" fill="url(#glow)" />
            <path
              d="M80.500 54L87.500 75L109 75L92 88L99 107.500L80.500 96L62.500 107.500L69 88L52 75L73.500 75z"
              fill="url(#star)" stroke="url(#star)" strokeWidth="3" strokeLinejoin="round"
            />
          </Star>
          <span>Функции продукта</span>
        </Category>
      </Banner>
    </Page>
  </>
)

export default App
